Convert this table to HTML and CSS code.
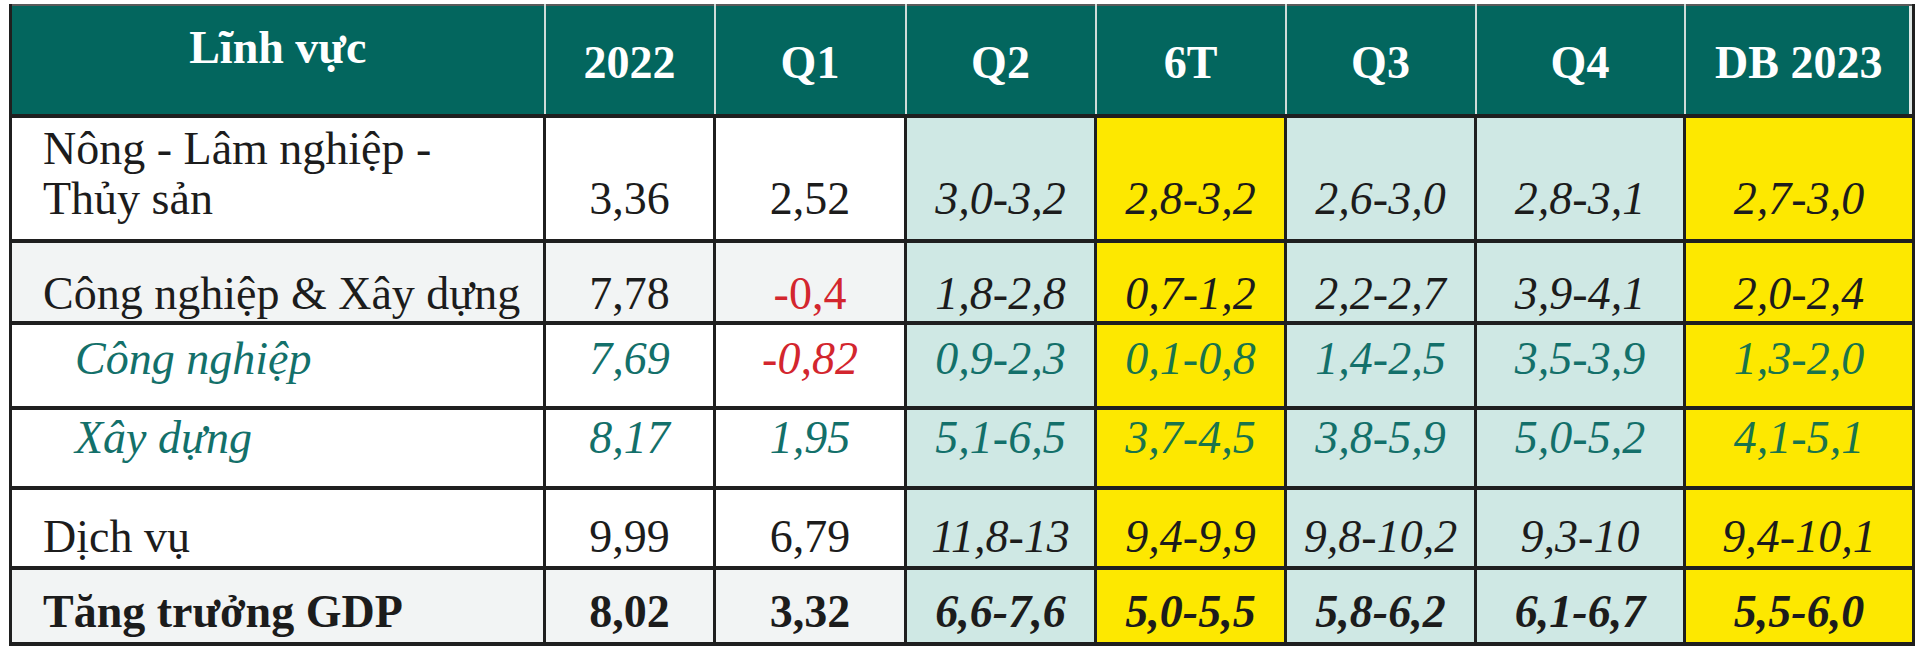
FILE: index.html
```html
<!DOCTYPE html>
<html lang="vi">

<head>
    <meta charset="UTF-8">
    <meta name="viewport" content="width=device-width, initial-scale=1.0">
    <title>Dự báo tăng trưởng GDP 2023</title>
    <link rel="stylesheet" href="styles.css">
</head>

<body>

    <div class="wrap">
        <table class="growth">
            <colgroup>
                <col class="c-sector">
                <col class="c-2022">
                <col class="c-q1">
                <col class="c-q2">
                <col class="c-6t">
                <col class="c-q3">
                <col class="c-q4">
                <col class="c-db">
            </colgroup>
            <thead>
                <tr>
                    <th class="sector">Lĩnh vực</th>
                    <th>2022</th>
                    <th>Q1</th>
                    <th>Q2</th>
                    <th>6T</th>
                    <th>Q3</th>
                    <th>Q4</th>
                    <th class="last">DB 2023</th>
                </tr>
            </thead>
            <tbody>
                <tr class="r-agri">
                    <td class="sector two-line">Nông - Lâm nghiệp -<br>Thủy sản</td>
                    <td>3,36</td>
                    <td>2,52</td>
                    <td class="fc">3,0-3,2</td>
                    <td class="hl">2,8-3,2</td>
                    <td class="fc">2,6-3,0</td>
                    <td class="fc">2,8-3,1</td>
                    <td class="hl">2,7-3,0</td>
                </tr>
                <tr class="r-ind shaded">
                    <td class="sector">Công nghiệp &amp; Xây dựng</td>
                    <td>7,78</td>
                    <td class="neg">-0,4</td>
                    <td class="fc">1,8-2,8</td>
                    <td class="hl">0,7-1,2</td>
                    <td class="fc">2,2-2,7</td>
                    <td class="fc">3,9-4,1</td>
                    <td class="hl">2,0-2,4</td>
                </tr>
                <tr class="r-sub1 sub">
                    <td class="sector">Công nghiệp</td>
                    <td>7,69</td>
                    <td class="neg">-0,82</td>
                    <td class="fc">0,9-2,3</td>
                    <td class="hl">0,1-0,8</td>
                    <td class="fc">1,4-2,5</td>
                    <td class="fc">3,5-3,9</td>
                    <td class="hl">1,3-2,0</td>
                </tr>
                <tr class="r-sub2 sub">
                    <td class="sector">Xây dựng</td>
                    <td>8,17</td>
                    <td>1,95</td>
                    <td class="fc">5,1-6,5</td>
                    <td class="hl">3,7-4,5</td>
                    <td class="fc">3,8-5,9</td>
                    <td class="fc">5,0-5,2</td>
                    <td class="hl">4,1-5,1</td>
                </tr>
                <tr class="r-serv">
                    <td class="sector">Dịch vụ</td>
                    <td>9,99</td>
                    <td>6,79</td>
                    <td class="fc">11,8-13</td>
                    <td class="hl">9,4-9,9</td>
                    <td class="fc">9,8-10,2</td>
                    <td class="fc">9,3-10</td>
                    <td class="hl">9,4-10,1</td>
                </tr>
                <tr class="r-total total shaded">
                    <td class="sector">Tăng trưởng GDP</td>
                    <td>8,02</td>
                    <td>3,32</td>
                    <td class="fc">6,6-7,6</td>
                    <td class="hl">5,0-5,5</td>
                    <td class="fc">5,8-6,2</td>
                    <td class="fc">6,1-6,7</td>
                    <td class="hl">5,5-6,0</td>
                </tr>
            </tbody>
        </table>
    </div>

</body>

</html>
```

FILE: styles.css
```css
body {
    margin: 0;
    background: #fff;
    font-family: "Liberation Serif", "Times New Roman", serif;
}

.wrap {
    padding: 4px 0 0 9px;
}

.growth {
    border-collapse: collapse;
    table-layout: fixed;
    width: 1903px;
    border-top: 2px solid #5a5a5a;
    border-left: 3px solid #1f1f1f;
    border-right: 3px solid #1f1f1f;
    border-bottom: 4px solid #1f1f1f;
    box-shadow: 0 3px 0 #c9c9c9;
}

.c-sector { width: 534px; }
.c-2022 { width: 170px; }
.c-q1 { width: 191px; }
.c-q2 { width: 190px; }
.c-6t { width: 190px; }
.c-q3 { width: 190px; }
.c-q4 { width: 209px; }
.c-db { width: 229px; }

/* hàng tiêu đề */
.growth th {
    height: 111px;
    padding: 34px 0 0;
    box-sizing: border-box;
    vertical-align: top;
    background: #03665e;
    color: #fff;
    font-size: 46px;
    line-height: 45px;
    font-weight: bold;
    text-align: center;
    border-left: 2px solid #cfdcd9;
    border-bottom: 4px solid #1f1f1f;
}

.growth th.sector {
    padding-top: 19px;
    border-left: 3px solid #1f1f1f;
}

.growth th.last {
    box-shadow: inset -3px 0 0 #dfe8e6;
}

/* ô dữ liệu */
.growth td {
    padding: 0;
    font-size: 46px;
    line-height: 45px;
    color: #1c1c1c;
    text-align: center;
    vertical-align: bottom;
    border: 3px solid #1f1f1f;
    border-top-width: 4px;
    border-bottom-width: 4px;
    background: #fff;
}

.growth td.sector {
    text-align: left;
    padding-left: 31px;
}

.growth td.fc {
    background: #cfe8e4;
    font-style: italic;
}

.growth td.hl {
    background: #fde800;
    font-style: italic;
}

.shaded td {
    background: #f2f4f4;
}

.growth td.neg {
    color: #d3262e;
}

/* chiều cao và khoảng cách dưới từng hàng */
.r-agri { height: 125px; }
.r-agri td { padding-bottom: 18px; }

.growth .r-agri td.two-line {
    line-height: 50px;
    padding-bottom: 15px;
}

.r-ind { height: 82px; }
.r-ind td { padding-bottom: 5px; }

.r-sub1 { height: 85px; }
.r-sub1 td { padding-bottom: 25px; }

.r-sub2 { height: 80px; }
.r-sub2 td { padding-bottom: 26px; }

.r-serv { height: 80px; }
.r-serv td { padding-bottom: 7px; }

.r-total { height: 76px; }
.r-total td { padding-bottom: 8px; }

/* hàng con: chữ nghiêng màu xanh */
.sub td {
    font-style: italic;
    color: #13706a;
}

.sub td.sector {
    padding-left: 63px;
}

.sub td.hl {
    color: #19744c;
}

.sub td.neg {
    color: #d3262e;
}

.total td {
    font-weight: bold;
}
```
